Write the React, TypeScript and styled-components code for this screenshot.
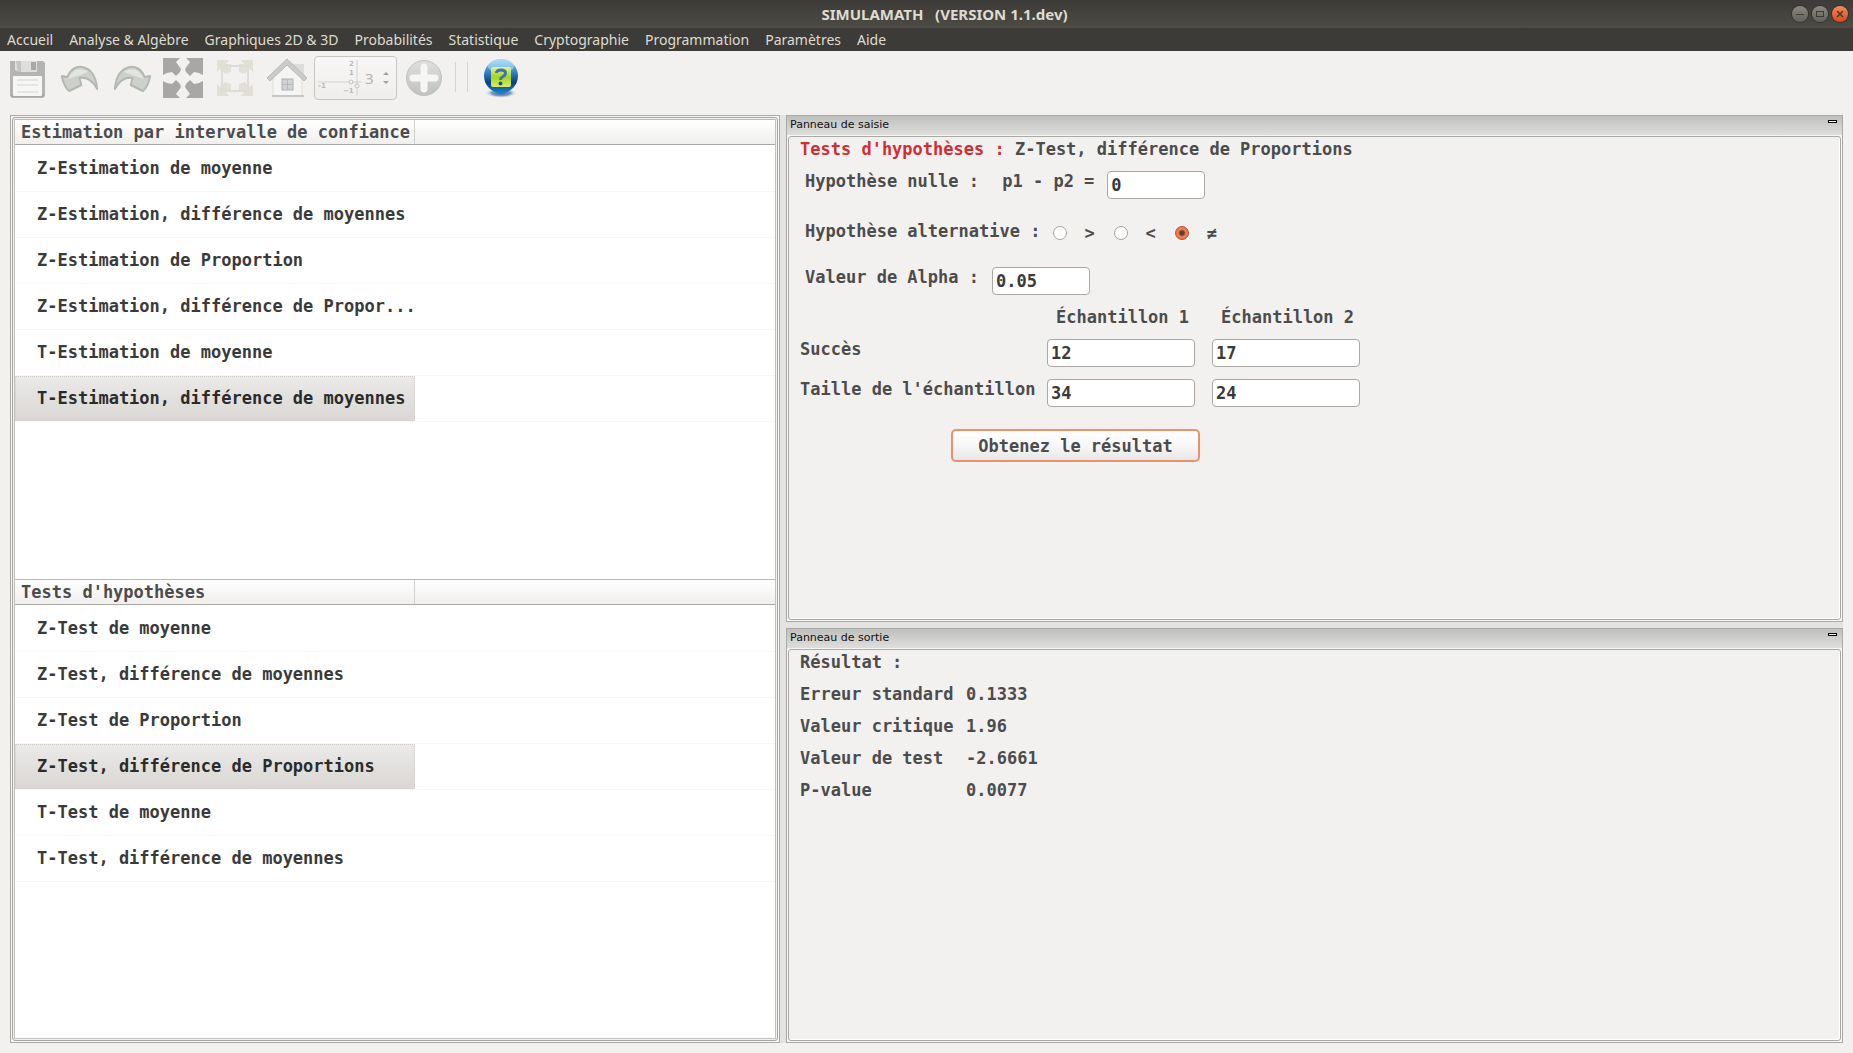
import React, { useState } from "react";
import styled, { createGlobalStyle, css } from "styled-components";

const MONO = '"DejaVu Sans Mono", monospace';
const UI = '"Noto Sans", sans-serif';

const GlobalStyle = createGlobalStyle`
  *, *::before, *::after { box-sizing: border-box; }
  body { margin: 0; background: #f2f1f0; color: #4c4c4c; }
  button, input { font: inherit; color: inherit; margin: 0; }
  ul { list-style: none; margin: 0; padding: 0; }
`;

const Window = styled.div`
  display: flex;
  flex-direction: column;
  min-height: 100vh;
  font: bold 17px/20px ${MONO};
`;

const TitleBar = styled.header`
  display: grid;
  grid-template-columns: 1fr auto 1fr;
  align-items: center;
  height: 28px;
  padding: 0 5px;
  background: linear-gradient(#3c3b37, #4d4b44);
`;

const WindowTitle = styled.h1`
  grid-column: 2;
  margin: 0;
  padding-left: 36px;
  font: bold 15px/20px ${UI};
  color: #dfdbd2;
  white-space: pre;
`;

const WindowControls = styled.div`
  display: flex;
  justify-content: flex-end;
  gap: 4px;
`;

const WindowControl = styled.button<{ $close?: boolean }>`
  width: 16px;
  height: 16px;
  padding: 0;
  border: 0;
  border-radius: 50%;
  background: ${(p) =>
    p.$close ? "linear-gradient(#f58a63, #dd4814)" : "linear-gradient(#8b8981, #63615b)"};
  box-shadow: 0 0 0 1px #33322e;
  svg { display: block; }
`;

const MenuBar = styled.nav`
  display: flex;
  gap: 16px;
  height: 23px;
  padding: 0 7px;
  background: #3c3b37;
  font: 14px/23px ${UI};
`;

const MenuLink = styled.a`
  color: #dfdbd2;
  text-decoration: none;
  white-space: nowrap;
`;

const Toolbar = styled.div`
  display: flex;
  align-items: flex-start;
  gap: 5px;
  height: 64px;
  padding: 5px 5px 0;
`;

const ToolGroup = styled.div`
  display: flex;
  gap: 8px;
`;

const ToolButton = styled.button`
  width: 44px;
  height: 44px;
  padding: 0;
  border: 0;
  background: none;
  svg { display: block; }
`;

const TickSpinner = styled.div`
  display: flex;
  align-items: center;
  width: 83px;
  height: 44px;
  padding-left: 3px;
  border: 1px solid #c9c6c1;
  border-radius: 4px;
  background: linear-gradient(#f8f7f7, #efeeec);
`;

const TickInput = styled.input`
  width: 20px;
  padding: 0 0 0 3px;
  border: 0;
  background: none;
  color: #b5b1ac;
  font: 15px/20px ${UI};
  appearance: textfield;
  &::-webkit-inner-spin-button { appearance: none; }
`;

const SpinArrows = styled.div`
  display: flex;
  flex-direction: column;
`;

const SpinArrow = styled.button`
  display: block;
  width: 8px;
  height: 9px;
  padding: 0;
  border: 0;
  background: none;
  svg { display: block; }
`;

const ToolDivider = styled.div`
  width: 13px;
  height: 30px;
  margin: 6px 6px 0 4px;
  border: 1px solid #d6d4d1;
  border-width: 0 1px;
`;

const Workspace = styled.main`
  flex: 1;
  display: grid;
  grid-template-columns: minmax(0, 770fr) minmax(0, 1057fr);
  gap: 6px;
  margin: 0 10px 10px;
  background: #e3e3e2;
`;

const Navigator = styled.section`
  display: flex;
  padding: 1px;
  border: 1px solid #a9a9a6;
  background: #f6f6f5;
`;

const NavigatorFrame = styled.div`
  flex: 1;
  display: grid;
  grid-template-rows: 1fr 1fr;
  padding: 1px;
  border: 1px solid #a9a7a3;
  border-radius: 3px;
  background: #ffffff;
  box-shadow: inset 0 0 0 1px #f2f1f0, inset 0 0 0 2px #c3c1bd;
`;

const Tree = styled.section`
  margin: 0 1px;
  border-top: 1px solid #bab7b3;
`;

const TreeHeader = styled.div`
  display: flex;
  height: 25px;
  border-bottom: 1px solid #aaa9a3;
  background: linear-gradient(#ffffff, #f0efee);
`;

const TreeTitle = styled.h2`
  width: 400px;
  margin: 0;
  padding: 2px 0 2px 6px;
  border-right: 1px solid #d2d0cc;
  font: inherit;
  white-space: nowrap;
`;

const TreeRows = styled.ul`
  && { padding-top: 1px; }
`;

const TreeRow = styled.li`
  height: 46px;
  border-bottom: 1px solid #f7f7f6;
`;

const TreeItem = styled.button<{ $selected: boolean }>`
  display: block;
  width: 400px;
  height: 45px;
  padding: 0 0 2px 22px;
  border: 0;
  background: none;
  color: #3a3a3a;
  text-align: left;
  white-space: nowrap;
  ${(p) =>
    p.$selected &&
    css`
      background: linear-gradient(#ebeae9, #dad7d4);
      color: #2b2b2b;
      outline: 1px dotted #d0cdc9;
      outline-offset: -1px;
    `}
`;

const Panels = styled.div`
  display: grid;
  grid-template-rows: 507fr 415fr;
  gap: 6px;
`;

const Panel = styled.section`
  display: flex;
  flex-direction: column;
  padding: 0 1px 1px;
  border: 1px solid #a9a9a6;
  background: #f6f6f5;
`;

const PanelBar = styled.div`
  display: flex;
  justify-content: space-between;
  height: 19px;
  margin: 0 -1px 1px;
  padding: 0 5px 0 3px;
  background: linear-gradient(#bfbfbd, #dededc);
`;

const PanelTitle = styled.h2`
  margin: 0;
  font: 11px/17px "DejaVu Sans", sans-serif;
  color: #111111;
`;

const MinimizeButton = styled.button`
  width: 9px;
  height: 3px;
  margin-top: 4px;
  padding: 0;
  border: 1px solid #000000;
  background: #ffffff;
`;

const PanelBody = styled.div`
  flex: 1;
  padding: 2px 11px;
  border: 1px solid #a9a9a6;
  border-radius: 3px;
  background: #f2f1f0;
  box-shadow: inset -1px -1px 0 #ffffff;
`;

const Heading = styled.h3`
  margin: 0 0 12px;
  font: inherit;
`;

const Accent = styled.span`
  color: #cf2f33;
`;

const FieldRow = styled.div`
  display: flex;
  align-items: flex-start;
  padding: 0 5px;
  margin-bottom: 22px;
`;

const FieldLabel = styled.label`
  margin-right: 13px;
  white-space: pre;
`;

const TextField = styled.input<{ $wide?: boolean }>`
  display: block;
  width: ${(p) => (p.$wide ? 148 : 98)}px;
  height: 28px;
  padding: 0 3px;
  border: 1px solid #aba8a3;
  border-radius: 4px;
  background: #ffffff;
  color: #3a3a3a;
  outline: 0;
`;

const AltGroup = styled.fieldset`
  display: flex;
  align-items: flex-start;
  height: 24px;
  padding: 0 5px;
  margin: 0 0 22px;
  border: 0;
`;

const AltLabel = styled.legend`
  float: left;
  margin-right: 13px;
  padding: 0;
`;

const Choice = styled.label`
  display: flex;
  align-items: center;
  gap: 17px;
  width: 61px;
  height: 24px;
`;

const Radio = styled.input`
  appearance: none;
  flex: none;
  width: 14px;
  height: 14px;
  border: 1px solid #a5a29d;
  border-radius: 50%;
  background: #ffffff;
  &:checked {
    border-color: #b9532f;
    background: radial-gradient(circle, #6b3c2a 0 2px, #f4845a 4px, #ee7143 6px);
  }
`;

const SampleTable = styled.table`
  border-collapse: collapse;
  margin: -10px 0 10px;
  th, td { padding: 0; font-weight: bold; }
  th { text-align: left; vertical-align: top; }
  thead th { height: 32px; padding-left: 9px; }
  tbody th { width: 247px; }
  tbody td { height: 40px; width: 165px; vertical-align: top; }
`;

const ResultButton = styled.button`
  display: block;
  width: 249px;
  height: 33px;
  margin-left: 151px;
  border: 2px solid #ec8f6c;
  border-radius: 5px;
  background: linear-gradient(#ffffff, #f7f7f7 50%, #e8e7e6);
`;

const ResultTable = styled.table`
  border-collapse: collapse;
  th, td { height: 32px; padding: 0; text-align: left; vertical-align: top; }
  th { width: 166px; }
`;

const SaveIcon = () => (
  <svg width="44" height="44" viewBox="0 0 44 44">
    <path d="M5 5h33l2 2v33l-2 2H7l-2-2z" fill="#b4b4b2" />
    <path d="M6 38h33v3H6z" fill="#a8a8a6" />
    <path d="M10 5h22v11H14l-4-2z" fill="#dededd" />
    <path d="M11 5h5v11h-3z" fill="#c4c4c2" />
    <rect x="26" y="6" width="5" height="8" fill="#a9a9a8" />
    <rect x="8" y="20" width="29" height="20" rx="1" fill="#f6f6f5" />
    <path d="M12 24h21M12 29h21M12 36h21" stroke="#d4d4d2" />
  </svg>
);

const ArrowShape = () => (
  <>
    <path
      d="M3 20 L9 21 C13 12 20 10 25 11 C36 13 40 22 41 33 C36 25 31 21 22 22 L24 29 L11 35 C7 33 4 25 3 20Z"
      transform="translate(2 0) scale(0.93 1)"
      fill="#ccd2cb"
      stroke="#b3b7b2"
      strokeWidth="2"
      strokeLinejoin="round"
    />
    <path d="M11 23 C15 13 24 11 31 16 L20 20Z" fill="#e2e5e1" />
  </>
);

const UndoIcon = () => (
  <svg width="44" height="44" viewBox="0 0 44 44"><ArrowShape /></svg>
);

const RedoIcon = () => (
  <svg width="44" height="44" viewBox="0 0 44 44">
    <g transform="translate(46 0) scale(-1 1)"><ArrowShape /></g>
  </svg>
);

const corner = "M0 0H17L13 4L18 11L17 14L13 18L9 14L4 15L0 17Z";

const ExpandIcon = () => (
  <svg width="44" height="44" viewBox="0 0 44 44" fill="#a8a7a5">
    <g transform="translate(2 2)"><path d={corner} /></g>
    <g transform="translate(42 2) scale(-1 1)"><path d={corner} /></g>
    <g transform="translate(2 42) scale(1 -1)"><path d={corner} /></g>
    <g transform="translate(42 42) scale(-1 -1)"><path d={corner} /></g>
  </svg>
);

const small = "M0 0H12L9 4H14V12L8 14L6 11L3 9L0 12Z";

const FitIcon = () => (
  <svg width="44" height="44" viewBox="0 0 44 44" fill="#e2dfd5">
    <g transform="translate(4 4)"><path d={small} /></g>
    <g transform="translate(40 4) scale(-1 1)"><path d={small} /></g>
    <g transform="translate(4 40) scale(1 -1)"><path d={small} /></g>
    <g transform="translate(40 40) scale(-1 -1)"><path d={small} /></g>
    <rect x="9" y="10" width="26" height="25" fill="none" stroke="#dcdcdb" strokeWidth="2" />
  </svg>
);

const HomeIcon = () => (
  <svg width="44" height="44" viewBox="0 0 44 44">
    <path d="M24 8h15v13H30z" fill="#dcdcdb" />
    <path d="M8 22 L22 8 L37 22 V40 H8Z" fill="#f5f5f4" stroke="#dededc" />
    <path d="M7 40h32" stroke="#c6c6c4" strokeWidth="2" />
    <path d="M2 22 L22 3 L42 22 L39 25 L22 9 L5 25Z" fill="#cbcbc9" stroke="#bababa" />
    <rect x="17" y="23" width="11" height="11" fill="#cfd3d6" stroke="#b0b0ae" />
    <path d="M22.500 23v11M17 28.500h11" stroke="#b9bbbd" />
  </svg>
);

const AxesIcon = () => (
  <svg width="44" height="40" viewBox="0 0 44 40" fontFamily="DejaVu Sans" fontSize="7" fill="#b9b8b6">
    <path d="M0 24h54M39 2v36" stroke="#d2d1cf" strokeWidth="1" />
    <circle cx="39" cy="28" r="2" fill="#f2f1f0" stroke="#c4c3c1" />
    <circle cx="33" cy="24" r="2" fill="#f2f1f0" stroke="#c4c3c1" />
    <text x="31" y="8">2</text>
    <text x="31" y="17">1</text>
    <text x="0" y="30">-1</text>
    <text x="25" y="35">−1</text>
  </svg>
);

const AddIcon = () => (
  <svg width="44" height="44" viewBox="0 0 44 44">
    <defs>
      <linearGradient id="addFill" x1="0" y1="0" x2="0" y2="1">
        <stop offset="0" stopColor="#dfe0de" />
        <stop offset="1" stopColor="#bfc1be" />
      </linearGradient>
    </defs>
    <circle cx="22" cy="22" r="17.500" fill="url(#addFill)" stroke="#c1c3c0" />
    <path d="M22 11v22M11 22h22" stroke="#f6f6f5" strokeWidth="7" strokeLinecap="round" />
  </svg>
);

const HelpIcon = () => (
  <svg width="44" height="44" viewBox="0 0 44 44">
    <defs>
      <linearGradient id="helpBall" x1="0" y1="0" x2="0" y2="1">
        <stop offset="0" stopColor="#8ed2f6" />
        <stop offset="0.4" stopColor="#2f7fc6" />
        <stop offset="0.7" stopColor="#0a3f86" />
        <stop offset="1" stopColor="#1c83cf" />
      </linearGradient>
      <linearGradient id="helpTile" x1="0" y1="0" x2="0" y2="1">
        <stop offset="0" stopColor="#e6f39a" />
        <stop offset="0.5" stopColor="#a5d31f" />
        <stop offset="1" stopColor="#d8ef6c" />
      </linearGradient>
      <radialGradient id="helpShadow">
        <stop offset="0" stopColor="#2f64a4" />
        <stop offset="0.6" stopColor="#7d9dc4" />
        <stop offset="1" stopColor="#f2f1f0" stopOpacity="0" />
      </radialGradient>
    </defs>
    <ellipse cx="22" cy="37" rx="16" ry="5" fill="url(#helpShadow)" />
    <circle cx="22" cy="20" r="17" fill="url(#helpBall)" />
    <ellipse cx="22" cy="10" rx="13" ry="7" fill="#c3e8fb" opacity="0.5" />
    <rect x="12" y="11" width="20" height="20" rx="2" fill="url(#helpTile)" />
    <path d="M17.500 17q0-3 4.500-3t4.500 3q0 2-3 4q-2 1-2 3" fill="none" stroke="#3b76b4" strokeWidth="3" />
    <circle cx="21.500" cy="27.500" r="2" fill="#1e5296" />
  </svg>
);

const MENU = [
  "Accueil",
  "Analyse & Algèbre",
  "Graphiques 2D & 3D",
  "Probabilités",
  "Statistique",
  "Cryptographie",
  "Programmation",
  "Paramètres",
  "Aide",
];

const ESTIMATIONS = [
  "Z-Estimation de moyenne",
  "Z-Estimation, différence de moyennes",
  "Z-Estimation de Proportion",
  "Z-Estimation, différence de Propor...",
  "T-Estimation de moyenne",
  "T-Estimation, différence de moyennes",
];

const TESTS = [
  "Z-Test de moyenne",
  "Z-Test, différence de moyennes",
  "Z-Test de Proportion",
  "Z-Test, différence de Proportions",
  "T-Test de moyenne",
  "T-Test, différence de moyennes",
];

const RESULTS = [
  ["Erreur standard", "0.1333"],
  ["Valeur critique", "1.96"],
  ["Valeur de test", "-2.6661"],
  ["P-value", "0.0077"],
];

const SAMPLES = [
  { label: "Succès", values: ["12", "17"] },
  { label: "Taille de l'échantillon", values: ["34", "24"] },
];

function TreeList({ title, items, initial }: { title: string; items: string[]; initial: number }) {
  const [selected, setSelected] = useState(initial);
  return (
    <Tree>
      <TreeHeader>
        <TreeTitle>{title}</TreeTitle>
      </TreeHeader>
      <TreeRows>
        {items.map((item, i) => (
          <TreeRow key={item}>
            <TreeItem type="button" $selected={i === selected} onClick={() => setSelected(i)}>
              {item}
            </TreeItem>
          </TreeRow>
        ))}
      </TreeRows>
    </Tree>
  );
}

function DockPanel({ title, children }: { title: string; children: React.ReactNode }) {
  return (
    <Panel>
      <PanelBar>
        <PanelTitle>{title}</PanelTitle>
        <MinimizeButton type="button" aria-label="Réduire" />
      </PanelBar>
      <PanelBody>{children}</PanelBody>
    </Panel>
  );
}

export default function App() {
  const [alternative, setAlternative] = useState("≠");
  return (
    <Window>
      <GlobalStyle />
      <TitleBar>
        <WindowTitle>{"SIMULAMATH   (VERSION 1.1.dev)"}</WindowTitle>
        <WindowControls>
          <WindowControl type="button" aria-label="Minimiser">
            <svg width="16" height="16" stroke="#3c3b37"><path d="M4 8.500h8" /></svg>
          </WindowControl>
          <WindowControl type="button" aria-label="Agrandir">
            <svg width="16" height="16" stroke="#3c3b37" fill="none"><rect x="4.500" y="5.500" width="7" height="5" /></svg>
          </WindowControl>
          <WindowControl type="button" $close aria-label="Fermer">
            <svg width="16" height="16" stroke="#3c3b37" strokeWidth="1.500"><path d="M5 5l6 6M11 5l-6 6" /></svg>
          </WindowControl>
        </WindowControls>
      </TitleBar>
      <MenuBar>
        {MENU.map((m) => (
          <MenuLink key={m} href="#">{m}</MenuLink>
        ))}
      </MenuBar>
      <Toolbar>
        <ToolGroup>
          <ToolButton type="button" aria-label="Enregistrer"><SaveIcon /></ToolButton>
          <ToolButton type="button" aria-label="Annuler"><UndoIcon /></ToolButton>
          <ToolButton type="button" aria-label="Rétablir"><RedoIcon /></ToolButton>
          <ToolButton type="button" aria-label="Plein écran"><ExpandIcon /></ToolButton>
          <ToolButton type="button" aria-label="Ajuster"><FitIcon /></ToolButton>
          <ToolButton type="button" aria-label="Vue initiale"><HomeIcon /></ToolButton>
        </ToolGroup>
        <TickSpinner>
          <AxesIcon />
          <TickInput type="number" aria-label="Graduation" defaultValue={3} />
          <SpinArrows>
            <SpinArrow type="button" aria-label="Augmenter">
              <svg width="8" height="9" fill="#a3a19d"><path d="M1 6h6L4 3z" /></svg>
            </SpinArrow>
            <SpinArrow type="button" aria-label="Diminuer">
              <svg width="8" height="9" fill="#a3a19d"><path d="M1 3h6L4 6z" /></svg>
            </SpinArrow>
          </SpinArrows>
        </TickSpinner>
        <ToolButton type="button" aria-label="Ajouter"><AddIcon /></ToolButton>
        <ToolDivider />
        <ToolButton type="button" aria-label="Aide"><HelpIcon /></ToolButton>
      </Toolbar>
      <Workspace>
        <Navigator>
          <NavigatorFrame>
            <TreeList title="Estimation par intervalle de confiance" items={ESTIMATIONS} initial={5} />
            <TreeList title="Tests d'hypothèses" items={TESTS} initial={3} />
          </NavigatorFrame>
        </Navigator>
        <Panels>
          <DockPanel title="Panneau de saisie">
            <Heading>
              <Accent>Tests d'hypothèses :</Accent> Z-Test, différence de Proportions
            </Heading>
            <FieldRow>
              <FieldLabel htmlFor="null-value">Hypothèse nulle :</FieldLabel>
              <FieldLabel as="span"> p1 - p2 =</FieldLabel>
              <TextField id="null-value" defaultValue="0" />
            </FieldRow>
            <AltGroup>
              <AltLabel>Hypothèse alternative :</AltLabel>
              {[">", "<", "≠"].map((sign) => (
                <Choice key={sign}>
                  <Radio
                    type="radio"
                    name="alternative"
                    checked={alternative === sign}
                    onChange={() => setAlternative(sign)}
                  />
                  {sign}
                </Choice>
              ))}
            </AltGroup>
            <FieldRow>
              <FieldLabel htmlFor="alpha">Valeur de Alpha :</FieldLabel>
              <TextField id="alpha" defaultValue="0.05" />
            </FieldRow>
            <SampleTable>
              <thead>
                <tr>
                  <td />
                  <th scope="col">Échantillon 1</th>
                  <th scope="col">Échantillon 2</th>
                </tr>
              </thead>
              <tbody>
                {SAMPLES.map((row) => (
                  <tr key={row.label}>
                    <th scope="row">{row.label}</th>
                    {row.values.map((v, i) => (
                      <td key={i}>
                        <TextField $wide defaultValue={v} aria-label={`${row.label}, échantillon ${i + 1}`} />
                      </td>
                    ))}
                  </tr>
                ))}
              </tbody>
            </SampleTable>
            <ResultButton type="button">Obtenez le résultat</ResultButton>
          </DockPanel>
          <DockPanel title="Panneau de sortie">
            <Heading>Résultat :</Heading>
            <ResultTable>
              <tbody>
                {RESULTS.map(([name, value]) => (
                  <tr key={name}>
                    <th scope="row">{name}</th>
                    <td>{value}</td>
                  </tr>
                ))}
              </tbody>
            </ResultTable>
          </DockPanel>
        </Panels>
      </Workspace>
    </Window>
  );
}
